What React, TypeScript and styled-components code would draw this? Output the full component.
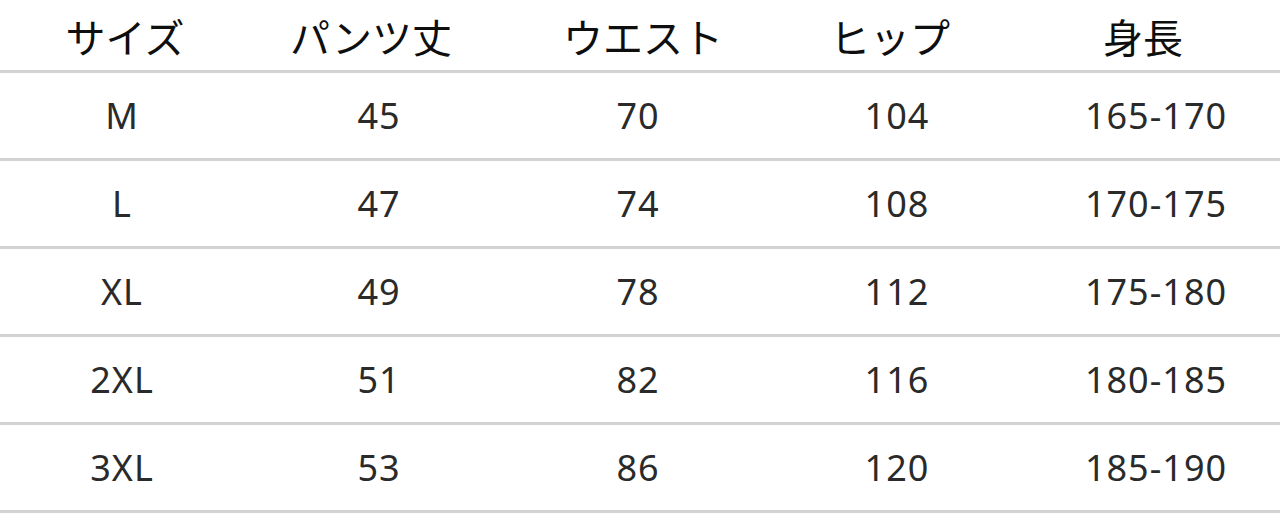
import React from "react";
import styled, { createGlobalStyle } from "styled-components";

const Global = createGlobalStyle`
  html, body { margin: 0; padding: 0; background: #ffffff; }
  body { width: 1280px; height: 522px; overflow: hidden; }
`;

const Table = styled.div`
  width: 1280px;
  display: flex;
  flex-direction: column;
  background: #ffffff;
`;

const Row = styled.div<{ $head?: boolean }>`
  display: grid;
  grid-template-columns: repeat(5, 1fr);
  align-items: center;
  height: ${(p) => (p.$head ? "70px" : "85px")};
  border-bottom: 3px solid #d3d3d3;
  box-sizing: content-box;
`;

const HeadCell = styled.div<{ $dx: number }>`
  text-align: center;
  font-family: "Noto Sans CJK JP", "Noto Sans", sans-serif;
  font-size: 40px;
  font-weight: 400;
  color: #0e0e0e;
  line-height: 1;
  padding-top: 2px;
  transform: translateX(${(p) => p.$dx}px);
`;

const Cell = styled.div<{ $dx: number }>`
  text-align: center;
  font-family: "Noto Sans", "DejaVu Sans", sans-serif;
  font-size: 36px;
  font-weight: 400;
  letter-spacing: 1px;
  color: #2a2a2a;
  line-height: 1;
  transform: translateX(${(p) => p.$dx}px);
`;

const heads = ["サイズ", "パンツ丈", "ウエスト", "ヒップ", "身長"];
const headDx = [-3, -13, 3, -6, -9];
const cellDx = [-6, -5, -2, 1, 4];
const rows = [
  ["M", "45", "70", "104", "165-170"],
  ["L", "47", "74", "108", "170-175"],
  ["XL", "49", "78", "112", "175-180"],
  ["2XL", "51", "82", "116", "180-185"],
  ["3XL", "53", "86", "120", "185-190"],
];

export default function App() {
  return (
    <>
      <Global />
      <Table>
        <Row $head>
          {heads.map((h, i) => (
            <HeadCell key={h} $dx={headDx[i]}>
              {h}
            </HeadCell>
          ))}
        </Row>
        {rows.map((r) => (
          <Row key={r[0]}>
            {r.map((c, i) => (
              <Cell key={i} $dx={cellDx[i]}>
                {c}
              </Cell>
            ))}
          </Row>
        ))}
      </Table>
    </>
  );
}
